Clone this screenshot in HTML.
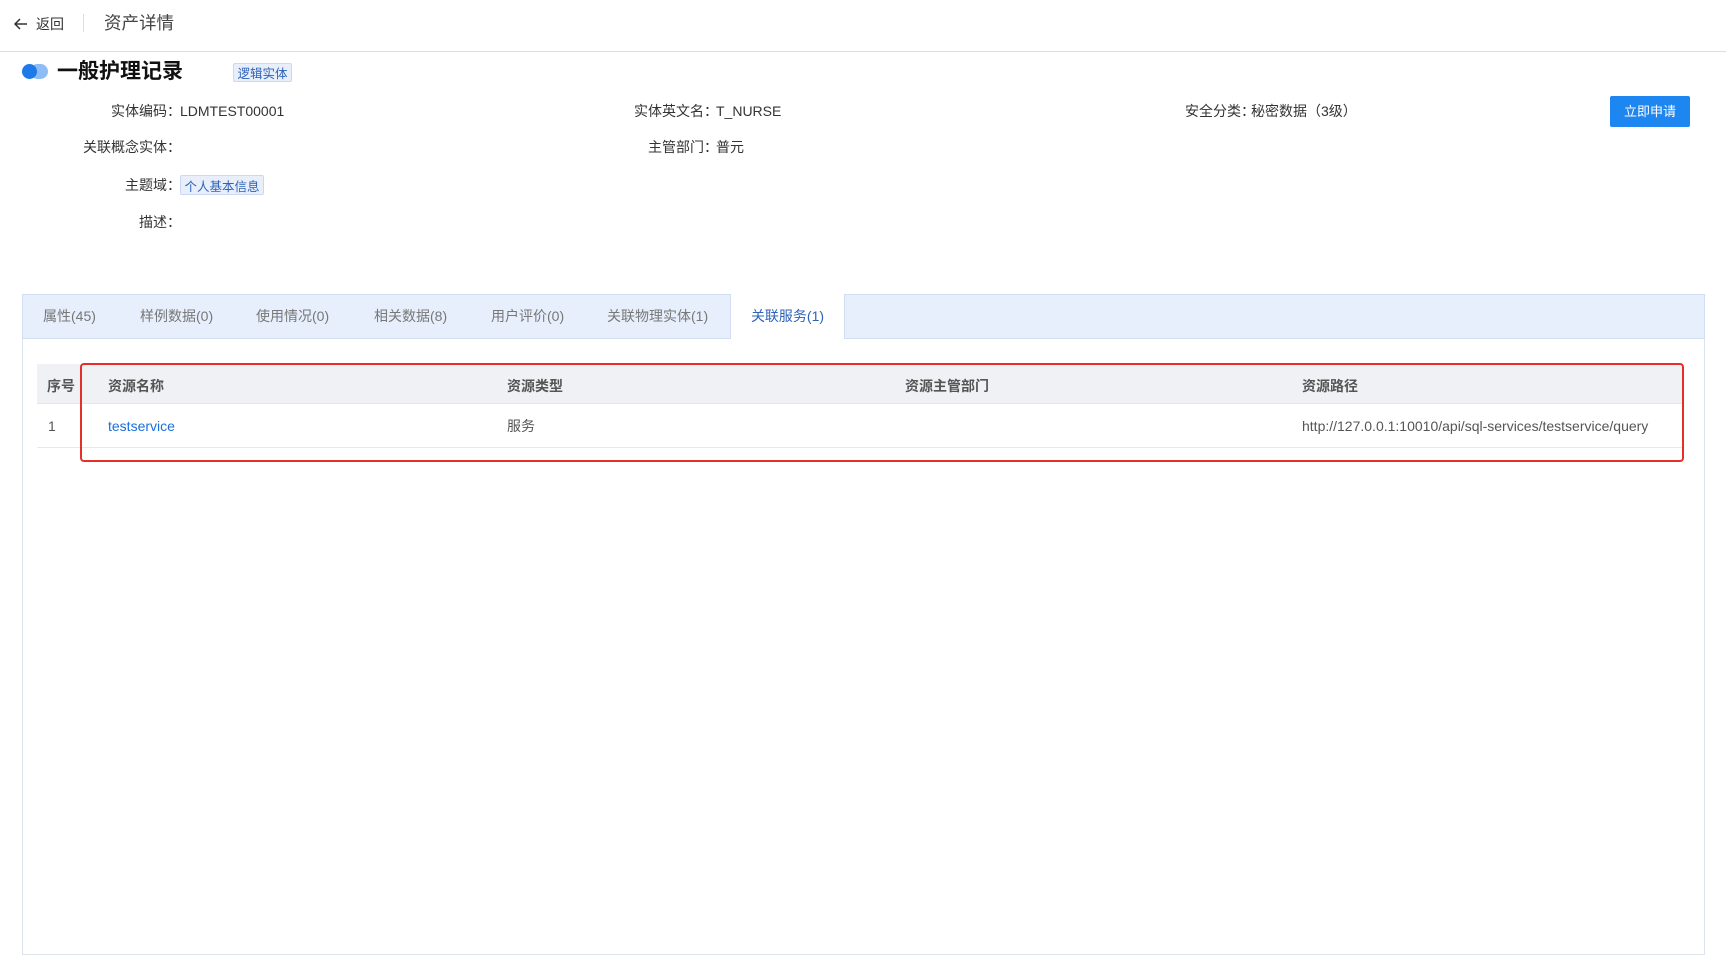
<!DOCTYPE html>
<html><head><meta charset="utf-8"><style>
*{margin:0;padding:0;box-sizing:border-box}
body{width:1726px;height:977px;background:#fff;font-family:"Liberation Sans","Noto Sans CJK SC",sans-serif;color:#333;font-size:14px;position:relative;overflow:hidden}
.a{position:absolute;white-space:nowrap;line-height:1}
.lbl{text-align:right}
.tag{position:absolute;background:#e8effb;border:1px solid #c9d8f3;color:#2f62b8;font-size:12.5px;display:flex;align-items:center;justify-content:center;border-radius:2px}
.tab{position:absolute;top:294px;height:44px;line-height:44px;color:#777;font-size:14px}
</style></head><body>
<svg class="a" style="left:13px;top:16px" width="16" height="16" viewBox="0 0 16 16"><path d="M14 8H2M7 3L2 8l5 5" fill="none" stroke="#333" stroke-width="1.5"/></svg>
<div class="a" style="left:36px;top:17px;font-size:14px">返回</div>
<div class="a" style="left:83px;top:14px;width:1px;height:18px;background:#ddd"></div>
<div class="a" style="left:104px;top:15px;font-size:17.5px;color:#444">资产详情</div>
<div class="a" style="left:0;top:51px;width:1726px;height:1px;background:#ddd"></div>
<div class="a" style="left:30px;top:64px;width:18px;height:15px;border-radius:8px;background:#8fbcf5"></div>
<div class="a" style="left:22px;top:64px;width:15px;height:15px;border-radius:50%;background:#1e7ae6"></div>
<div class="a" style="left:57px;top:61px;font-size:21px;font-weight:bold;color:#111">一般护理记录</div>
<div class="tag" style="left:233px;top:63px;width:59px;height:19px">逻辑实体</div>
<div class="a lbl" style="left:40px;width:141px;top:104px">实体编码：</div><div class="a" style="left:180px;top:104px">LDMTEST00001</div>
<div class="a lbl" style="left:560px;width:158px;top:104px">实体英文名：</div><div class="a" style="left:716px;top:104px">T_NURSE</div>
<div class="a lbl" style="left:1100px;width:155px;top:104px">安全分类：</div><div class="a" style="left:1251px;top:104px">秘密数据（3级）</div>
<div class="a" style="left:1610px;top:96px;width:80px;height:31px;background:#1e86f0;color:#fff;border-radius:2px;font-size:13px;display:flex;align-items:center;justify-content:center">立即申请</div>
<div class="a lbl" style="left:40px;width:141px;top:140px">关联概念实体：</div>
<div class="a lbl" style="left:560px;width:158px;top:140px">主管部门：</div><div class="a" style="left:716px;top:140px">普元</div>
<div class="a lbl" style="left:40px;width:141px;top:178px">主题域：</div>
<div class="tag" style="left:180px;top:175px;width:84px;height:20px">个人基本信息</div>
<div class="a lbl" style="left:40px;width:141px;top:215px">描述：</div>
<div class="a" style="left:22px;top:294px;width:1683px;height:661px;border:1px solid #dde3ec;border-top:none"></div>
<div class="a" style="left:22px;top:294px;width:1683px;height:45px;background:#e7effc;border:1px solid #d3def0"></div>
<div class="tab" style="left:43px">属性(45)</div>
<div class="tab" style="left:140px">样例数据(0)</div>
<div class="tab" style="left:256px">使用情况(0)</div>
<div class="tab" style="left:374px">相关数据(8)</div>
<div class="tab" style="left:491px">用户评价(0)</div>
<div class="tab" style="left:607px">关联物理实体(1)</div>
<div class="tab" style="left:730px;width:115px;height:45px;background:#fff;color:#2f62b8;text-align:center;border-left:1px solid #d3def0;border-right:1px solid #d3def0">关联服务(1)</div>
<div class="a" style="left:37px;top:364px;width:1646px;height:40px;background:#eff1f5;border-bottom:1px solid #e3e6eb"></div>
<div class="a" style="left:37px;top:447px;width:1646px;height:1px;background:#e6e8ec"></div>
<div class="a" style="left:47px;top:379px;font-weight:bold;color:#555">序号</div>
<div class="a" style="left:108px;top:379px;font-weight:bold;color:#555">资源名称</div>
<div class="a" style="left:507px;top:379px;font-weight:bold;color:#555">资源类型</div>
<div class="a" style="left:905px;top:379px;font-weight:bold;color:#555">资源主管部门</div>
<div class="a" style="left:1302px;top:379px;font-weight:bold;color:#555">资源路径</div>
<div class="a" style="left:48px;top:419px;color:#555">1</div>
<div class="a" style="left:108px;top:419px;color:#1a6fd8">testservice</div>
<div class="a" style="left:507px;top:419px;color:#555">服务</div>
<div class="a" style="left:1302px;top:419px;color:#555">http://127.0.0.1:10010/api/sql-services/testservice/query</div>
<div class="a" style="left:80px;top:363px;width:1604px;height:99px;border:2.5px solid #e5302a;border-radius:4px"></div>
</body></html>
